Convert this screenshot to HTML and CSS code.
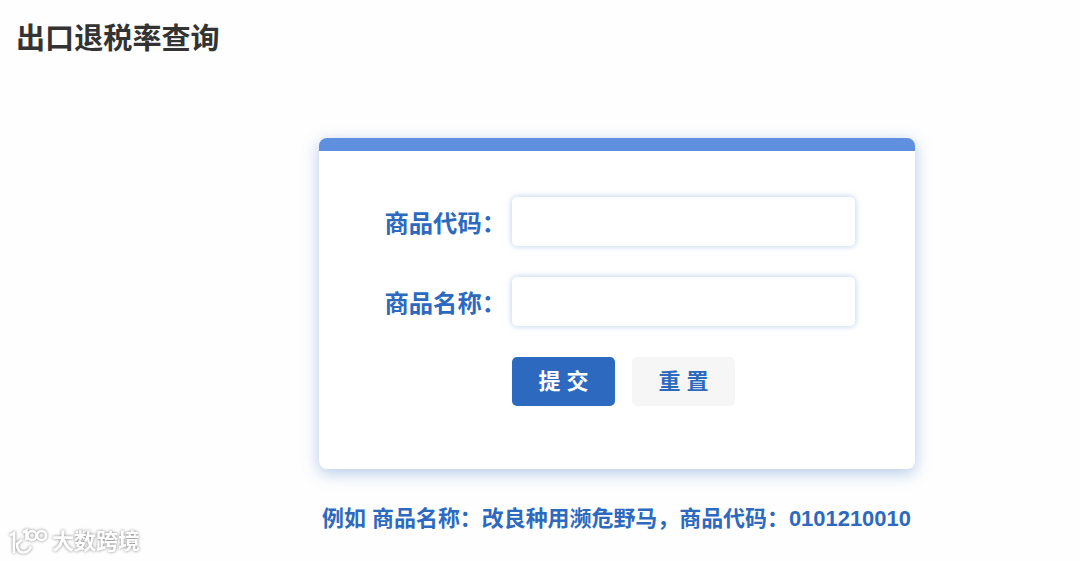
FILE: index.html
```
<!DOCTYPE html>
<html lang="zh-CN">
<head>
    <meta charset="UTF-8">
    <meta name="viewport" content="width=device-width, initial-scale=1.0">
    <title>出口退税率查询</title>
    <link rel="stylesheet" href="styles.css">
</head>
<body>
    <h1>出口退税率查询</h1>

    <div class="container">
        <form class="query-card">
            <div class="form-row">
                <label for="code">商品代码：</label>
                <input type="text" id="code" name="code">
            </div>
            <div class="form-row">
                <label for="name">商品名称：</label>
                <input type="text" id="name" name="name">
            </div>
            <div class="button-group">
                <button type="submit" class="submit-button">提 交</button>
                <button type="reset" class="reset-button">重 置</button>
            </div>
        </form>
        <p class="example">例如 商品名称：改良种用濒危野马，商品代码：0101210010</p>
    </div>

    <!-- Watermark -->
    <div class="watermark">
        <svg width="40" height="28" viewBox="0 0 40 28" fill="none" stroke="#fff" stroke-width="2.6">
            <path d="M2 7.500L6 5V25"/>
            <path d="M9 15C8.500 27 20 27 23 18.500"/>
            <path d="M9 16L14 11.500"/>
            <path d="M15 4.500L18.500 2.500V12"/>
            <circle cx="24" cy="7.500" r="4.500"/>
            <circle cx="33.500" cy="7.500" r="4.500"/>
        </svg>
        <span>大数跨境</span>
    </div>
</body>
</html>
```

FILE: styles.css
```
* {
    box-sizing: border-box;
    font-family: 'Liberation Sans', 'Noto Sans CJK SC', sans-serif;
}

body {
    margin: 0;
    min-height: 561px;
    background: #fefefe;
    color: #2d6abf;
    overflow: hidden;
}

h1 {
    margin: 0;
    padding: 17px 0 0 16px;
    height: 138px;
    font-size: 29.1px;
    line-height: 44px;
    color: #333;
}

.container {
    width: 596px;
    margin-left: 318.5px;
}

.query-card {
    height: 331px;
    padding: 46px 60px 0 66px;
    background: #fff;
    border-top: 13px solid #5f90df;
    border-radius: 8px;
    box-shadow: 0 4px 16px rgba(45, 106, 191, 0.36);
}

.form-row {
    display: flex;
    justify-content: space-between;
    align-items: center;
    height: 49px;
    margin-bottom: 31px;
}

label {
    font-size: 24.3px;
    font-weight: bold;
    white-space: nowrap;
}

input {
    width: 343px;
    height: 49px;
    padding: 0 12px;
    border: none;
    border-radius: 5px;
    outline: none;
    background: #fff;
    box-shadow: 0 0 6px rgba(45, 106, 191, 0.35);
    font-size: 22px;
}

.button-group {
    display: flex;
    gap: 17px;
    margin-left: 127.5px;
}

button {
    width: 103px;
    height: 49px;
    padding: 0 0 5px;
    border: none;
    border-radius: 5px;
    font-size: 22px;
    font-weight: bold;
    cursor: pointer;
}

.submit-button {
    background: #2d6abf;
    color: #fff;
}

.reset-button {
    background: #f6f6f6;
    color: #2d6abf;
}

.example {
    margin: 34px 0 0;
    font-size: 21.95px;
    font-weight: bold;
    line-height: 32px;
    text-align: center;
    white-space: nowrap;
}

.watermark {
    position: absolute;
    left: 8px;
    bottom: 5px;
    display: flex;
    align-items: center;
    gap: 4px;
    color: #fff;
    font-size: 22px;
    font-weight: bold;
    line-height: 28px;
    filter: drop-shadow(0 0 1.5px rgba(0, 0, 0, 0.5));
}
```
